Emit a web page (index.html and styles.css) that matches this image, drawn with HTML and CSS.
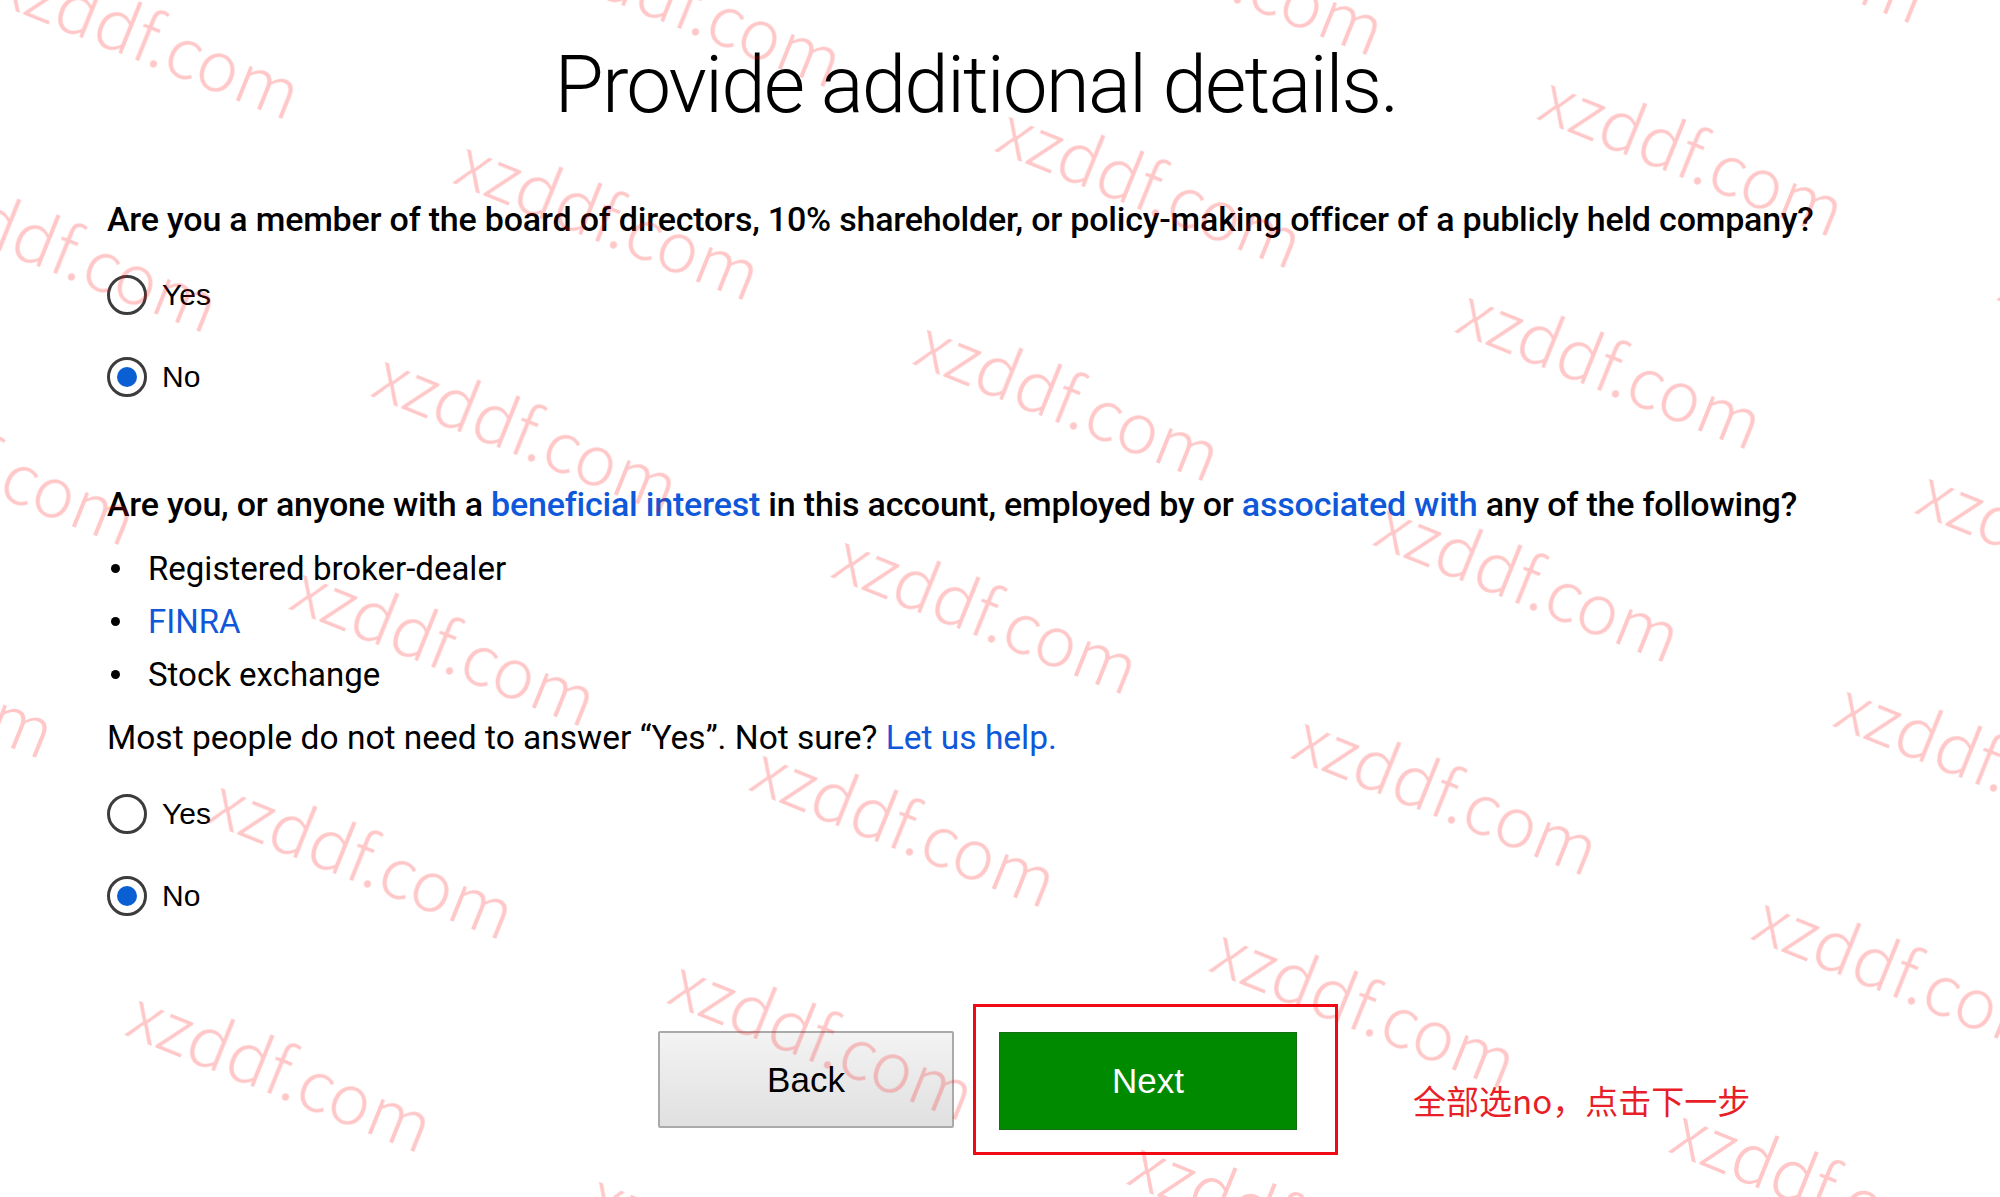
FILE: index.html
```html
<!DOCTYPE html>
<html>
  <head>
    <meta name="viewport" content="width=device-width, initial-scale=1.0">
    <title>Provide additional details</title>
    <link rel="stylesheet" href="styles.css">
  </head>
  <body>
    <div class="container">
      <h1 class="page-title">Provide additional details.</h1>

      <div class="question question-insider">
        <p class="question-text">Are you a member of the board of directors, 10% shareholder, or policy-making officer of a publicly held company?</p>
        <label class="radio-row">
          <span class="radio"></span>
          Yes
        </label>
        <label class="radio-row">
          <span class="radio radio-checked"></span>
          No
        </label>
      </div>

      <div class="question question-affiliation">
        <p class="question-text">Are you, or anyone with a <a href="#" class="link">beneficial interest</a> in this account, employed by or <a href="#" class="link">associated with</a> any of the following?</p>
        <ul class="affiliations">
          <li>Registered broker-dealer</li>
          <li><a href="#" class="link">FINRA</a></li>
          <li>Stock exchange</li>
        </ul>
        <p class="hint">Most people do not need to answer “Yes”. Not sure? <a href="#" class="link">Let us help.</a></p>
        <label class="radio-row">
          <span class="radio"></span>
          Yes
        </label>
        <label class="radio-row">
          <span class="radio radio-checked"></span>
          No
        </label>
      </div>

      <div class="actions">
        <button class="back-button">Back</button>
        <div class="highlight-box">
          <button class="next-button">Next</button>
        </div>
        <span class="annotation">全部选no，点击下一步</span>
      </div>
    </div>

    <div class="watermarks"></div>

    <script>
      const layer = document.querySelector(".watermarks");

      // tiled watermark, same lattice as the screenshot
      for (let n = -3; n <= 5; n++) {
        for (let m = -4; m <= 6; m++) {
          const x = 529 + n * 542 - m * 82;
          const y = 427 - n * 32 + m * 213;
          if (x < -300 || x > 2300 || y < -200 || y > 1400) continue;
          const mark = document.createElement("span");
          mark.className = "watermark";
          mark.textContent = "xzddf.com";
          mark.style.left = x + "px";
          mark.style.top = y + "px";
          layer.appendChild(mark);
        }
      }
    </script>
  </body>
</html>
```

FILE: styles.css
```css
body {
  margin: 0;
  background-color: white;
  color: black;
  font-family: Roboto, "Liberation Sans", sans-serif;
}
.container {
  width: 1738px;
  padding: 37px 0 0 107px;
}
.page-title {
  margin: 0;
  font-size: 80px;
  font-weight: 300;
  letter-spacing: -1.9px;
  line-height: 1.2;
  text-align: center;
}
.question-text {
  margin: 0;
  font-size: 34px;
  font-weight: 500;
  letter-spacing: -0.2px;
  line-height: 45.5px;
  white-space: nowrap;
}
.question-insider {
  margin-top: 64px;
}
.question-affiliation {
  margin-top: 64px;
}
.link {
  color: rgb(15, 88, 218);
  text-decoration: none;
}
.radio-row {
  display: flex;
  align-items: center;
  height: 82px;
  font-family: "Liberation Sans", Arial, sans-serif;
  font-size: 30px;
}
.question-text + .radio-row {
  margin-top: 11px;
}
.radio {
  width: 40px;
  height: 40px;
  box-sizing: border-box;
  border: 3px solid rgb(60, 60, 60);
  border-radius: 50%;
  margin-right: 15px;
  display: flex;
  align-items: center;
  justify-content: center;
}
.radio-checked::after {
  content: "";
  width: 20px;
  height: 20px;
  border-radius: 50%;
  background-color: rgb(10, 95, 210);
}
.affiliations {
  list-style: none;
  margin: 15px 0 0 0;
  padding: 0;
}
.affiliations li {
  display: flex;
  align-items: center;
  height: 53px;
  font-size: 33px;
}
.affiliations li::before {
  content: "";
  width: 9px;
  height: 9px;
  border-radius: 50%;
  background-color: black;
  margin: 0 28px 0 4px;
}
.hint {
  margin: 14px 0 0 0;
  font-size: 33.5px;
  line-height: 45px;
}
.hint + .radio-row {
  margin-top: 13px;
}
.actions {
  display: flex;
  align-items: center;
  margin: 67px 0 0 551px;
}
.back-button {
  width: 296px;
  height: 97px;
  border: 2px solid rgb(170, 170, 170);
  border-radius: 2px;
  background: linear-gradient(rgb(243, 243, 243), rgb(224, 224, 224));
  font-family: "Liberation Sans", Arial, sans-serif;
  font-size: 35px;
  color: black;
}
.highlight-box {
  margin-left: 19px;
  padding: 25px 38px 22px 23px;
  border: 3px solid rgb(240, 10, 20);
}
.next-button {
  display: block;
  width: 298px;
  height: 98px;
  border: 1px solid rgb(20, 110, 20);
  background-color: rgb(0, 138, 0);
  font-family: "Liberation Sans", Arial, sans-serif;
  font-size: 35px;
  color: white;
}
.annotation {
  margin: 40px 0 0 75px;
  font-family: "Noto Sans CJK SC", sans-serif;
  font-size: 33px;
  color: rgb(232, 30, 40);
}
.watermarks {
  position: fixed;
  top: 0;
  left: 0;
  right: 0;
  bottom: 0;
  overflow: hidden;
  pointer-events: none;
}
.watermark {
  position: absolute;
  transform: translate(-50%, -50%) rotate(22deg);
  font-family: "Noto Sans CJK SC", "Noto Sans", sans-serif;
  font-weight: 300;
  font-size: 70px;
  white-space: nowrap;
  color: rgba(255, 0, 0, 0.22);
}
```
